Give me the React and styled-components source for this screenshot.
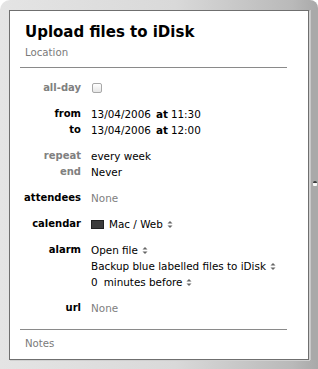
import React from "react";
import styled, { createGlobalStyle } from "styled-components";

const GlobalStyle = createGlobalStyle`
  html, body {
    margin: 0;
    padding: 0;
    background: #ffffff;
  }
  body {
    font-family: "DejaVu Sans", "Liberation Sans", sans-serif;
    -webkit-font-smoothing: antialiased;
  }
`;

const Frame = styled.div`
  width: 318px;
  height: 369px;
  box-sizing: border-box;
  display: flex;
  padding: 10px 0 9px 9px;
  border-radius: 10px 8px 0 0;
  background: linear-gradient(to right, #e4e4e4 0%, #d9d9d9 55%, #b9b9b9 92%, #a9a9a9 100%);
`;

const Panel = styled.div`
  width: 300px;
  box-sizing: border-box;
  background: #fff;
  border: 1px solid #6f6f6f;
  box-shadow: 1px 1px 0 #d0d0d0;
  display: flex;
  flex-direction: column;
`;

const Handle = styled.div`
  flex: 1;
  margin-left: 1px;
  border-left: 1px solid #c8c8c8;
  background: #a9a9a9;
  display: flex;
  align-items: center;
  justify-content: center;
  padding-bottom: 4px;
`;

const Knob = styled.div`
  width: 4px;
  height: 5px;
  border-radius: 2px 2px 1px 1px;
  background: linear-gradient(to bottom, #3a3a3a 0%, #3a3a3a 40%, #f4f4f4 41%, #ffffff 100%);
`;

const Header = styled.div`
  padding: 11px 15px 0;
`;

const Title = styled.h1`
  margin: 0;
  font-size: 15px;
  line-height: 20px;
  font-weight: bold;
  color: #000;
`;

const Subtle = styled.div`
  margin-top: ${(p) => p.$top || 0}px;
  padding-left: ${(p) => p.$indent || 0}px;
  font-size: 10.2px;
  line-height: 14px;
  color: #7a7a7a;
`;

const Divider = styled.hr`
  margin: ${(p) => p.$top}px 21px ${(p) => p.$bottom}px 10px;
  border: 0;
  height: 1px;
  background: #8a8a8a;
`;

const Group = styled.div`
  & + & {
    margin-top: 10px;
  }
`;

const Row = styled.div`
  display: grid;
  grid-template-columns: 71px 1fr;
  column-gap: 10px;
  font-size: 10px;
  line-height: 16px;
`;

const Label = styled.div`
  text-align: right;
  font-weight: bold;
  color: ${(p) => (p.$dim ? "#808080" : "#000")};
`;

const Value = styled.div`
  display: flex;
  align-items: center;
  white-space: nowrap;
  font-size: 10.4px;
  color: ${(p) => (p.$muted ? "#808080" : "#000")};
`;

const Bold = styled.span`
  font-weight: bold;
  margin-left: 5px;
  margin-right: 3px;
`;

const Spaced = styled.span`
  margin-right: 6px;
`;

const Check = styled.span`
  width: 8px;
  height: 8px;
  margin-left: 1px;
  border: 1px solid #a8a8a8;
  border-radius: 2px;
  background: linear-gradient(to bottom, #ffffff, #e6e6e6);
`;

const Swatch = styled.span`
  width: 11px;
  height: 7px;
  border: 1px solid #222;
  background: #3c3c3c;
  margin-right: 5px;
`;

const Stepper = () => (
  <svg width="6" height="9" viewBox="0 0 6 9" style={{ marginLeft: 4 }}>
    <path d="M3 1 L5.5 3.6 L0.5 3.6 Z" fill="#666" />
    <path d="M3 8 L5.5 5.4 L0.5 5.4 Z" fill="#666" />
  </svg>
);

export default function App() {
  return (
    <>
      <GlobalStyle />
      <Frame>
        <Panel>
          <Header>
            <Title>Upload files to iDisk</Title>
            <Subtle $top={4}>Location</Subtle>
          </Header>
          <Divider $top={7} $bottom={12} />

          <Group>
            <Row>
              <Label $dim>all-day</Label>
              <Value>
                <Check />
              </Value>
            </Row>
          </Group>

          <Group>
            <Row>
              <Label>from</Label>
              <Value>
                13/04/2006<Bold>at</Bold>11:30
              </Value>
            </Row>
            <Row>
              <Label>to</Label>
              <Value>
                13/04/2006<Bold>at</Bold>12:00
              </Value>
            </Row>
          </Group>

          <Group>
            <Row>
              <Label $dim>repeat</Label>
              <Value>every week</Value>
            </Row>
            <Row>
              <Label $dim>end</Label>
              <Value>Never</Value>
            </Row>
          </Group>

          <Group>
            <Row>
              <Label>attendees</Label>
              <Value $muted>None</Value>
            </Row>
          </Group>

          <Group>
            <Row>
              <Label>calendar</Label>
              <Value>
                <Swatch />
                Mac / Web
                <Stepper />
              </Value>
            </Row>
          </Group>

          <Group>
            <Row>
              <Label>alarm</Label>
              <Value>
                Open file
                <Stepper />
              </Value>
            </Row>
            <Row>
              <Label />
              <Value>
                Backup blue labelled files to iDisk
                <Stepper />
              </Value>
            </Row>
            <Row>
              <Label />
              <Value>
                <Spaced>0</Spaced>minutes before
                <Stepper />
              </Value>
            </Row>
          </Group>

          <Group>
            <Row>
              <Label>url</Label>
              <Value $muted>None</Value>
            </Row>
          </Group>

          <Divider $top={13} $bottom={7} />
          <Subtle $indent={15}>Notes</Subtle>
        </Panel>
        <Handle>
          <Knob />
        </Handle>
      </Frame>
    </>
  );
}
